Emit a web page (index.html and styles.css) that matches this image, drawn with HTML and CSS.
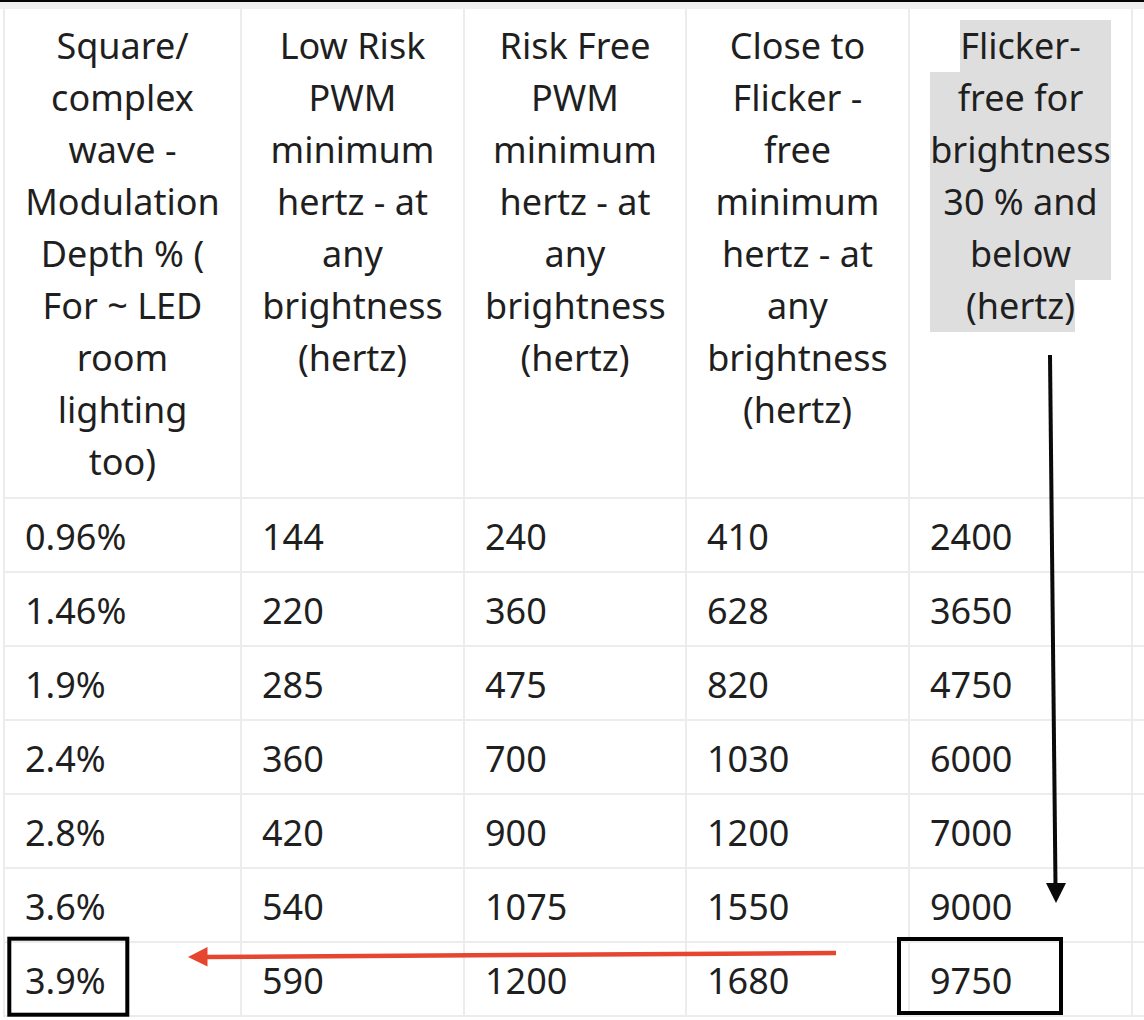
FILE: index.html
```html
<!DOCTYPE html>
<html lang="en">
<head>
<meta charset="utf-8">
<title>Flicker table</title>
<link rel="stylesheet" href="styles.css">
</head>
<body>
<div class="page">
  <div class="topbar"></div>
  <div class="strip"></div>
  <div class="table">
    <div class="c h">Square/<br>complex<br>wave -<br>Modulation<br>Depth % (<br>For ~ LED<br>room<br>lighting<br>too)</div>
    <div class="c h">Low Risk<br>PWM<br>minimum<br>hertz - at<br>any<br>brightness<br>(hertz)</div>
    <div class="c h">Risk Free<br>PWM<br>minimum<br>hertz - at<br>any<br>brightness<br>(hertz)</div>
    <div class="c h">Close to<br>Flicker -<br>free<br>minimum<br>hertz - at<br>any<br>brightness<br>(hertz)</div>
    <div class="c h"><div class="hl">Flicker-<br>free for<br>brightness<br>30 % and<br>below<br>(hertz)</div></div>
    <div class="c e"></div>

    <div class="c d">0.96%</div><div class="c d">144</div><div class="c d">240</div><div class="c d">410</div><div class="c d">2400</div><div class="c e"></div>
    <div class="c d">1.46%</div><div class="c d">220</div><div class="c d">360</div><div class="c d">628</div><div class="c d">3650</div><div class="c e"></div>
    <div class="c d">1.9%</div><div class="c d">285</div><div class="c d">475</div><div class="c d">820</div><div class="c d">4750</div><div class="c e"></div>
    <div class="c d">2.4%</div><div class="c d">360</div><div class="c d">700</div><div class="c d">1030</div><div class="c d">6000</div><div class="c e"></div>
    <div class="c d">2.8%</div><div class="c d">420</div><div class="c d">900</div><div class="c d">1200</div><div class="c d">7000</div><div class="c e"></div>
    <div class="c d">3.6%</div><div class="c d">540</div><div class="c d">1075</div><div class="c d">1550</div><div class="c d">9000</div><div class="c e"></div>
    <div class="c d">3.9%</div><div class="c d">590</div><div class="c d">1200</div><div class="c d">1680</div><div class="c d">9750</div><div class="c e"></div>
  </div>

  <svg class="marks" width="1144" height="1020" viewBox="0 0 1144 1020" aria-hidden="true">
    <line x1="1050" y1="355" x2="1055.5" y2="886" stroke="#0a0a0a" stroke-width="4"/>
    <polygon points="1046,883 1066,883 1056,903" fill="#0a0a0a"/>
    <line x1="836" y1="953" x2="204" y2="957" stroke="#e6452f" stroke-width="4.5"/>
    <polygon points="188,957 207.5,947 207.5,966.5" fill="#e6452f"/>
    <rect x="9.3" y="938.7" width="118" height="76" fill="none" stroke="#000" stroke-width="4"/>
    <rect x="899" y="939" width="162" height="74" fill="none" stroke="#000" stroke-width="4"/>
  </svg>
</div>
</body>
</html>
```

FILE: styles.css
```css
html, body {
  margin: 0;
  padding: 0;
  background: #ffffff;
}

.page {
  position: relative;
  width: 1144px;
  height: 1020px;
  overflow: hidden;
  font-family: "Noto Sans", "Open Sans", sans-serif;
  font-size: 36px;
  color: #1f1f1f;
}

.topbar {
  height: 2px;
  background: #050505;
}

.strip {
  height: 7px;
  background: #efefef;
}

.table {
  display: grid;
  grid-template-columns: 237px 223px 222px 223px 223px 1fr;
  margin-left: 3px;
}

.c {
  border-left: 2px solid #ececec;
  border-bottom: 2px solid #ececec;
}

.h {
  padding: 11px 20px 9px;
  line-height: 52px;
  text-align: center;
  white-space: nowrap;
}

.d {
  padding: 12px 20px 8px;
  line-height: 52px;
  white-space: nowrap;
}

.hl {
  position: relative;
  z-index: 0;
}

.hl::before {
  content: "";
  position: absolute;
  inset: 0;
  z-index: -1;
  background: #dedede;
  clip-path: polygon(30px 0, 100% 0, 100% 260px, 145px 260px, 145px 100%, 0 100%, 0 52px, 30px 52px);
}

.marks {
  position: absolute;
  left: 0;
  top: 0;
  pointer-events: none;
}
```
